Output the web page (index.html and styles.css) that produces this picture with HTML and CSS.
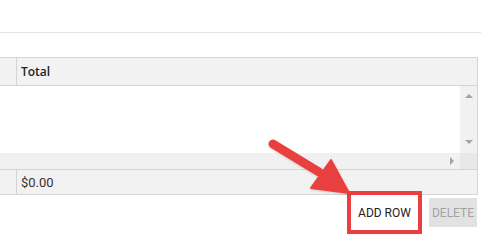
FILE: index.html
```html
<!DOCTYPE html>
<html>
<head>
<meta charset="utf-8">
<link rel="stylesheet" href="styles.css">
</head>
<body>
<div class="page">
  <div class="top"></div>
  <div class="spacer"></div>
  <div class="grid">
    <div class="row head">
      <div class="c0"></div>
      <div class="c1">Total</div>
    </div>
    <div class="body">
      <div class="cells"></div>
      <div class="vscroll">
        <span class="tri up"></span>
        <span class="tri down"></span>
      </div>
    </div>
    <div class="hscroll">
      <div class="htrack"><span class="tri right"></span></div>
      <div class="corner"></div>
    </div>
    <div class="row foot">
      <div class="c0"></div>
      <div class="c1 money">$0.00</div>
    </div>
  </div>
  <div class="actions">
    <button class="btn add">ADD ROW</button>
    <button class="btn del">DELETE</button>
  </div>
  <svg class="arrow" width="481" height="238" viewBox="0 0 481 238">
    <line x1="273" y1="144" x2="319" y2="172" stroke="#e9403f" stroke-width="9" stroke-linecap="round"/>
    <polygon points="311,188 331,160 349,193" fill="#e9403f" stroke="#e9403f" stroke-width="2" stroke-linejoin="round"/>
  </svg>
</div>
</body>
</html>
```
FILE: styles.css
```css
html, body {
  margin: 0;
  padding: 0;
  background: #ffffff;
}
.page {
  position: relative;
  width: 481px;
  height: 238px;
  overflow: hidden;
  font-family: "Open Sans", "Liberation Sans", sans-serif;
}
.top {
  height: 32px;
  border-bottom: 1px solid #e2e2e2;
}
.spacer {
  height: 24px;
}
.grid {
  width: 477px;
  border-right: 1px solid #d6d6d6;
}
.row {
  display: flex;
  background: #f2f2f2;
  border-top: 1px solid #d4d4d4;
  border-bottom: 1px solid #d4d4d4;
}
.head {
  height: 27px;
}
.foot {
  height: 24px;
}
.c0 {
  width: 16px;
  border-right: 1px solid #d4d4d4;
}
.c1 {
  flex: 1;
  display: flex;
  align-items: center;
  padding-left: 4px;
  color: #222222;
}
.head .c1 {
  font-size: 12px;
  font-weight: 600;
}
.money {
  font-family: Roboto, "Liberation Sans", sans-serif;
  font-size: 13px;
  color: #333333;
}
.body {
  display: flex;
  height: 67px;
}
.cells {
  flex: 1;
  background: #ffffff;
}
.vscroll {
  width: 17px;
  background: #f1f1f1;
  display: flex;
  flex-direction: column;
  justify-content: space-between;
  align-items: center;
  padding: 8px 0 9px;
  box-sizing: border-box;
}
.tri {
  display: block;
  width: 0;
  height: 0;
}
.tri.up {
  border-left: 4px solid transparent;
  border-right: 4px solid transparent;
  border-bottom: 4px solid #a3a3a3;
}
.tri.down {
  border-left: 4px solid transparent;
  border-right: 4px solid transparent;
  border-top: 4px solid #a3a3a3;
}
.tri.right {
  border-top: 4px solid transparent;
  border-bottom: 4px solid transparent;
  border-left: 4px solid #a3a3a3;
}
.hscroll {
  display: flex;
  height: 16px;
}
.htrack {
  flex: 1;
  background: #f1f1f1;
  display: flex;
  align-items: center;
  justify-content: flex-end;
  padding-right: 6px;
}
.corner {
  width: 17px;
  background: #e8e8e8;
}
.actions {
  display: flex;
  justify-content: flex-end;
  align-items: center;
  gap: 11px;
  padding-right: 4px;
  height: 35px;
}
.btn {
  font-family: Roboto, "Liberation Sans", sans-serif;
  font-size: 12px;
  font-weight: 400;
  border: none;
  margin: 0;
  padding: 0;
}
.add {
  width: 67px;
  height: 35px;
  background: #ffffff;
  color: #222222;
  box-shadow: 0 2px 4px rgba(0, 0, 0, 0.3);
  outline: 4px solid #e9403f;
}
.del {
  width: 48px;
  height: 29px;
  background: #e2e2e2;
  color: #a3a3a3;
}
.arrow {
  position: absolute;
  left: 0;
  top: 0;
  pointer-events: none;
  filter: drop-shadow(0 1px 1px rgba(0, 0, 0, 0.15));
}
```
